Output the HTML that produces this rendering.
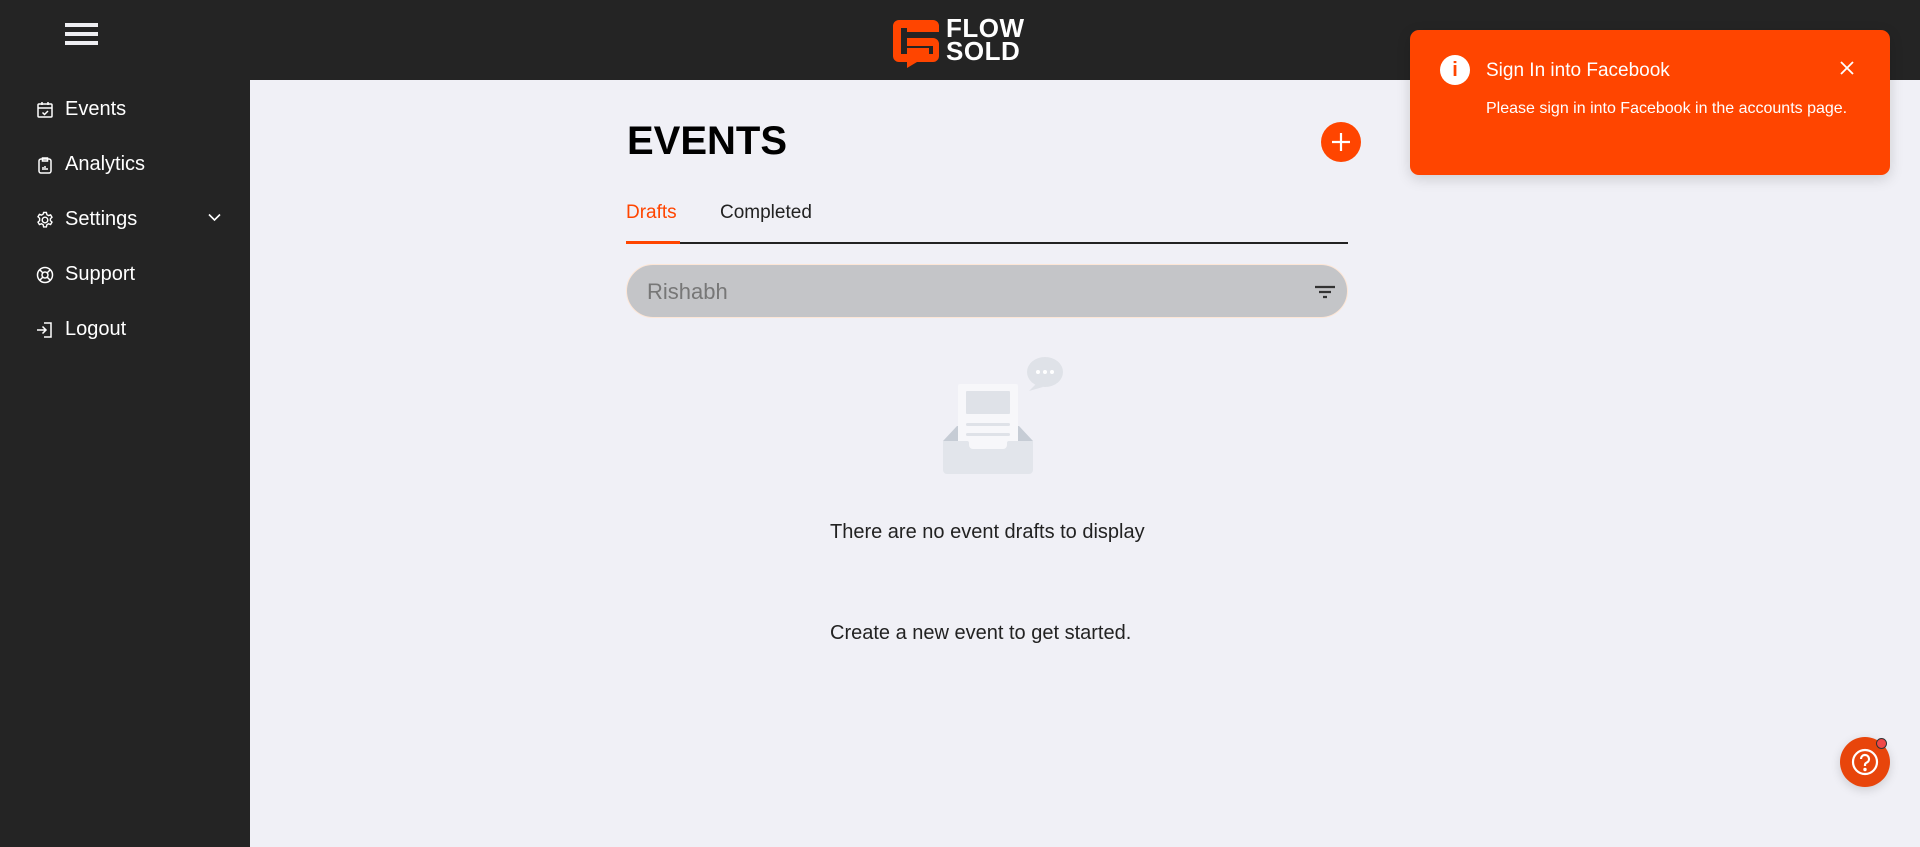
<!DOCTYPE html>
<html><head><meta charset="utf-8"><style>
*{margin:0;padding:0;box-sizing:border-box}
body{width:1920px;height:847px;overflow:hidden;background:#f0f0f6;font-family:"Liberation Sans",sans-serif;position:relative}
.top{position:absolute;left:0;top:0;width:1920px;height:80px;background:#242424}
.side{position:absolute;left:0;top:0;width:250px;height:847px;background:#242424}
.ham{position:absolute;left:65px;top:23px;width:33px;height:24px}
.ham i{display:block;height:4px;background:#eeeef2;margin-bottom:5px}
.nav{position:absolute;left:36px;color:#fff;font-size:20px;display:flex;align-items:center}
.nav svg{width:18px;height:18px;margin-right:11px}
.logo{position:absolute;left:893px;top:20px}
.lt{position:absolute;left:946px;top:17px;color:#fff;font-weight:bold;font-size:26px;line-height:23px;letter-spacing:0.5px}
.toast{position:absolute;left:1410px;top:30px;width:480px;height:145px;background:#ff4500;border-radius:9px;box-shadow:0 4px 14px rgba(0,0,0,.15);color:#fff}
.h1{position:absolute;left:627px;top:119px;font-size:40px;font-weight:bold;color:#000}
.plus{position:absolute;left:1321px;top:122px;width:40px;height:40px;border-radius:50%;background:#ff4500}
.tab{position:absolute;top:202px;font-size:19px}
.line{position:absolute;left:626px;top:242px;width:722px;height:1.5px;background:#222}
.search{position:absolute;left:626px;top:264px;width:722px;height:54px;border-radius:27px;background:#c4c5c8;border:1px solid #fde6d6}
.msg{position:absolute;font-size:20px;color:#222}
.help{position:absolute;left:1840px;top:737px;width:50px;height:50px;border-radius:50%;background:#e8450b;box-shadow:0 3px 10px rgba(0,0,0,.15)}
</style></head><body>
<div class="top"></div>
<div class="side">
<div class="ham"><i></i><i></i><i></i></div>
<div class="nav" style="top:98px"><svg viewBox="0 0 18 18" fill="none" stroke="#fff" stroke-width="1.5"><rect x="2" y="3" width="14" height="13" rx="1"/><path d="M2 7h14M6 1v3M12 1v3M6.5 11.5l2 2 3.5-3.5"/></svg>Events</div>
<div class="nav" style="top:153px"><svg viewBox="0 0 18 18" fill="none" stroke="#fff" stroke-width="1.5"><rect x="3" y="3" width="12" height="14" rx="2"/><path d="M6.5 2h5v3h-5zM7 14v-3M9 14v-4M11 14v-2"/></svg>Analytics</div>
<div class="nav" style="top:208px"><svg viewBox="0 0 18 18" fill="none" stroke="#fff" stroke-width="1.4"><circle cx="9" cy="9" r="2.8"/><path d="M7.6 1.5h2.8l.5 2.2 1.6.9 2.1-.7 1.4 2.4-1.6 1.5v1.8l1.6 1.5-1.4 2.4-2.1-.7-1.6.9-.5 2.2H7.6l-.5-2.2-1.6-.9-2.1.7-1.4-2.4 1.6-1.5V7.3L2 5.8l1.4-2.4 2.1.7 1.6-.9z"/></svg>Settings</div>
<svg style="position:absolute;left:208px;top:213px" width="13" height="9" viewBox="0 0 13 9" fill="none" stroke="#fff" stroke-width="1.6"><path d="M1 1.5l5.5 5.5 5.5-5.5"/></svg>
<div class="nav" style="top:263px"><svg viewBox="0 0 18 18" fill="none" stroke="#fff" stroke-width="1.5"><circle cx="9" cy="9" r="7.5"/><circle cx="9" cy="9" r="3"/><path d="M4 4l3 3M14 4l-3 3M4 14l3-3M14 14l-3-3"/></svg>Support</div>
<div class="nav" style="top:318px"><svg viewBox="0 0 18 18" fill="none" stroke="#fff" stroke-width="1.5"><path d="M8 2h7v14H8M1 9h9M6.5 5.5L10 9l-3.5 3.5"/></svg>Logout</div>
</div>
<svg class="logo" width="46" height="48" viewBox="0 0 46 48"><path d="M6 0h34a6 6 0 0 1 6 6v6H14v6h26a6 6 0 0 1 6 6v12a6 6 0 0 1-6 6H24l-10 6v-6H6a6 6 0 0 1-6-6V6a6 6 0 0 1 6-6zM8 8v26h6V28h22v6h4V26h-26v-18z" fill="#ff4500" fill-rule="evenodd"/></svg>
<div class="lt">FLOW<br>SOLD</div>
<div class="toast">
<div style="position:absolute;left:30px;top:25px;width:30px;height:30px;border-radius:50%;background:#fff;color:#ff4500;font-weight:bold;font-size:20px;text-align:center;line-height:30px">i</div>
<div style="position:absolute;left:76px;top:30px;font-size:19px">Sign In into Facebook</div>
<div style="position:absolute;left:76px;top:70px;font-size:16px">Please sign in into Facebook in the accounts page.</div>
<svg style="position:absolute;left:430px;top:31px" width="14" height="14" viewBox="0 0 14 14" stroke="#fff" stroke-width="1.8"><path d="M1 1l12 12M13 1L1 13"/></svg>
</div>
<div class="h1">EVENTS</div>
<div class="plus"><svg width="40" height="40" viewBox="0 0 40 40" stroke="#fff" stroke-width="2.2"><path d="M20 11v18M11 20h18"/></svg></div>
<div class="tab" style="left:626px;color:#ff4500">Drafts</div>
<div class="tab" style="left:720px;color:#222">Completed</div>
<div class="line"></div>
<div style="position:absolute;left:626px;top:241px;width:54px;height:3px;background:#ff4500"></div>
<div class="search"><span style="position:absolute;left:20px;top:14px;font-size:22px;color:#777">Rishabh</span>
<svg style="position:absolute;left:686px;top:18px" width="24" height="18" viewBox="0 0 24 18" stroke="#333" stroke-width="2.2"><path d="M2 4h20M6 9h12M10 14h4"/></svg></div>
<svg style="position:absolute;left:940px;top:355px" width="125" height="125" viewBox="0 0 125 125">
<ellipse cx="105" cy="17" rx="18" ry="15" fill="#dfe2e8"/><path d="M96 29l-7 7 14-4z" fill="#dfe2e8"/>
<circle cx="98" cy="17" r="2" fill="#fff"/><circle cx="105" cy="17" r="2" fill="#fff"/><circle cx="112" cy="17" r="2" fill="#fff"/>
<path d="M3 86l14-15h62l14 15z" fill="#c6ccd5"/>
<rect x="18" y="29" width="60" height="70" rx="2" fill="#f7f7fa"/>
<rect x="26" y="36" width="44" height="23" rx="1" fill="#dfe2e8"/>
<rect x="26" y="68" width="44" height="3" rx="1.5" fill="#dfe2e8"/><rect x="26" y="78" width="44" height="3" rx="1.5" fill="#dfe2e8"/>
<path d="M3 86h24a2 2 0 0 1 2 2v2a4 4 0 0 0 4 4h30a4 4 0 0 0 4-4v-2a2 2 0 0 1 2-2h24v29a4 4 0 0 1-4 4H7a4 4 0 0 1-4-4z" fill="#e2e5eb"/>
</svg>
<div class="msg" style="left:830px;top:521px">There are no event drafts to display</div>
<div class="msg" style="left:830px;top:622px">Create a new event to get started.</div>
<div class="help"><svg width="50" height="50" viewBox="0 0 50 50" fill="none" stroke="#fff" stroke-width="2.2"><circle cx="25" cy="25" r="12"/><path d="M21 22a4 4 0 1 1 5.5 3.7c-1 .5-1.5 1.2-1.5 2.3v1"/><circle cx="25" cy="32.5" r=".6" fill="#fff"/></svg></div>
<div style="position:absolute;left:1876px;top:738px;width:11px;height:11px;border-radius:50%;background:#f04848;border:1.5px solid #333"></div>
</body></html>
